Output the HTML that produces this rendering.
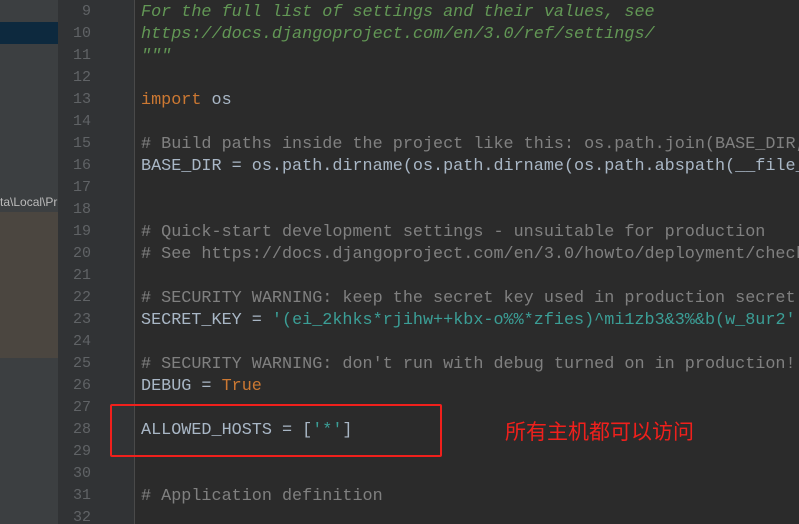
<!DOCTYPE html><html><head><meta charset="utf-8"><style>
html,body{margin:0;width:799px;height:524px;overflow:hidden}
body{background:#2b2b2b;position:relative;font-family:"Liberation Mono",monospace}
.left{position:absolute;left:0;top:0;width:58px;height:524px;background:#3c3f41}
.sel{position:absolute;left:0;top:22px;width:58px;height:22px;background:#0d293e}
.brown{position:absolute;left:0;top:212px;width:58px;height:146px;background:#4b4640}
.path{position:absolute;left:0;top:195px;font:12px "Liberation Sans",sans-serif;color:#bbb;white-space:nowrap;width:58px;overflow:hidden}
.gut{position:absolute;left:58px;top:0;width:77px;height:524px;background:#313335}
.fold{position:absolute;left:134px;top:0;width:1px;height:524px;background:#4a4a4a}
.ln{position:absolute;left:58px;top:1px;width:33px;text-align:right;color:#606366;font-size:15px;line-height:22px}
.wrap{position:absolute;left:141px;top:2px;width:658px;height:522px;overflow:hidden}
.code{font-size:16.8px;line-height:22px;color:#a9b7c6;white-space:pre}
.c{color:#808080}.d{color:#629755;font-style:italic}.k{color:#cc7832}.s{color:#3b9e96}
.box{position:absolute;left:110px;top:404px;width:328px;height:49px;border:2px solid #f0201c;border-radius:2px}
.cn{position:absolute;left:505px;top:416px;color:#f0201c;font:21px "Liberation Sans","Noto Sans CJK SC",sans-serif}
</style></head><body>
<div class="left"></div><div class="sel"></div><div class="brown"></div><div class="path">ta\Local\Pr</div>
<div class="gut"></div><div class="fold"></div>
<div class="ln">9<br>10<br>11<br>12<br>13<br>14<br>15<br>16<br>17<br>18<br>19<br>20<br>21<br>22<br>23<br>24<br>25<br>26<br>27<br>28<br>29<br>30<br>31<br>32</div>
<div class="wrap"><div class="code"><span class="d">For the full list of settings and their values, see
https://docs.djangoproject.com/en/3.0/ref/settings/
"""</span>

<span class="k">import</span> os

<span class="c"># Build paths inside the project like this: os.path.join(BASE_DIR, ...)</span>
BASE_DIR = os.path.dirname(os.path.dirname(os.path.abspath(__file__)))


<span class="c"># Quick-start development settings - unsuitable for production</span>
<span class="c"># See https://docs.djangoproject.com/en/3.0/howto/deployment/checklist/</span>

<span class="c"># SECURITY WARNING: keep the secret key used in production secret!</span>
SECRET_KEY = <span class="s">'(ei_2khks*rjihw++kbx-o%%*zfies)^mi1zb3&amp;3%&amp;b(w_8ur2'</span>

<span class="c"># SECURITY WARNING: don't run with debug turned on in production!</span>
DEBUG = <span class="k">True</span>

ALLOWED_HOSTS = [<span class="s">'*'</span>]


<span class="c"># Application definition</span>
</div></div>
<div class="box"></div>
<div class="cn">所有主机都可以访问</div>
</body></html>
